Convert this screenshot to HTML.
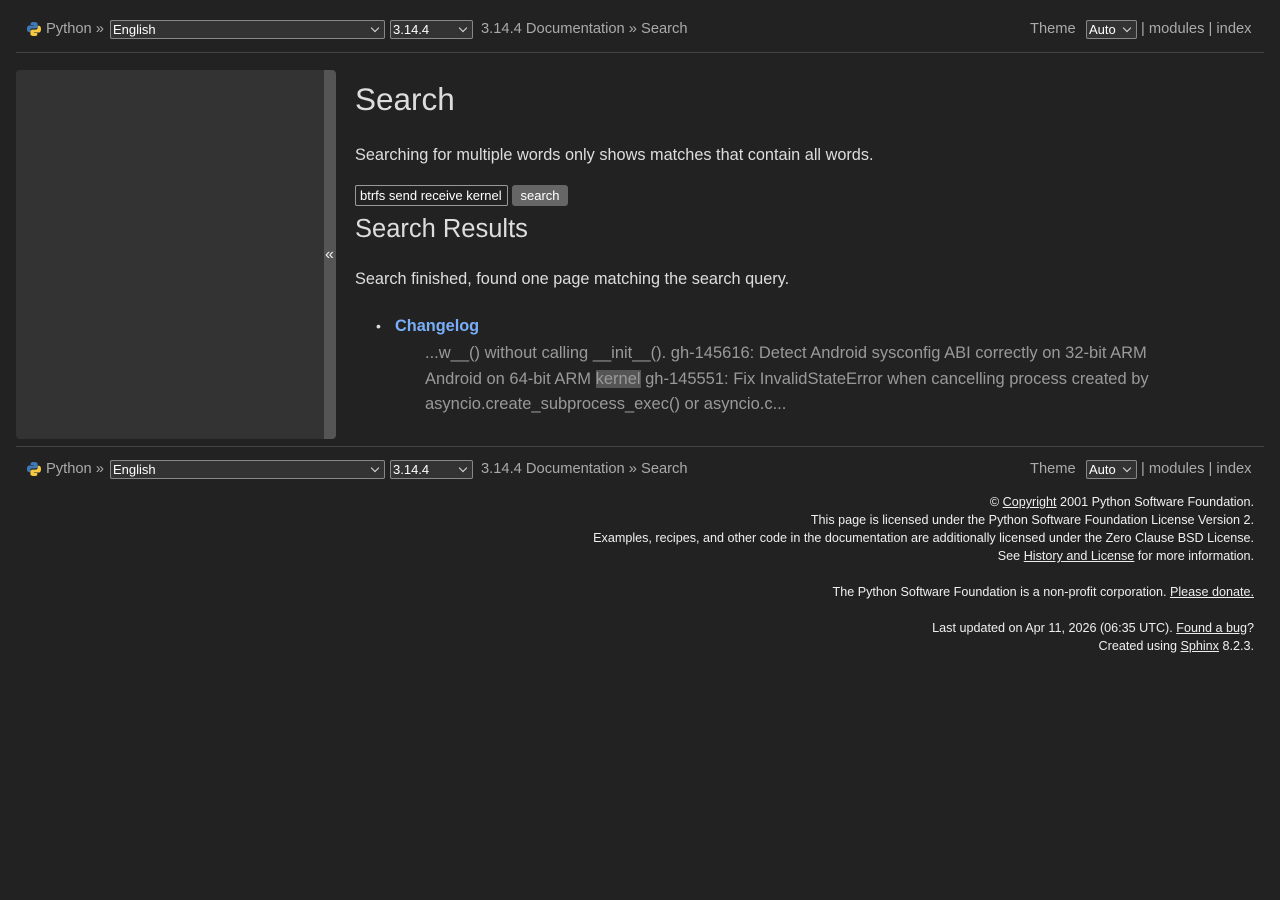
<!DOCTYPE html>
<html><head><meta charset="utf-8"><style>
body{margin:0;background:#222;color:#ddd;font-family:"Liberation Sans",Helvetica,Arial,sans-serif;width:1280px;height:900px;position:relative;overflow:hidden}
.a{position:absolute;white-space:nowrap}
.nav{font-size:14.7px;color:#aaa}
.sel{position:absolute;background:#333;border:1px solid #888;border-radius:2px;color:#fff;font-size:13px;height:19px;box-sizing:border-box;line-height:17px;padding-left:2px}
.sel:after{content:"";position:absolute;right:6px;top:4px;width:5px;height:5px;border-right:1.5px solid #ddd;border-bottom:1.5px solid #ddd;transform:rotate(45deg)}
.hr{position:absolute;left:16px;width:1248px;height:1px;background:#444}
.foot{position:absolute;right:26px;font-size:12.6px;color:#eee;text-align:right;line-height:18px}
.foot u{color:#eee}
</style></head><body>
<svg class="a" style="left:26px;top:21px" width="16" height="16" viewBox="0 0 16 16"><path d="M7.8 1C4.5 1 4.7 2.4 4.7 2.4V4h3.2v.5H3.4S1 4.2 1 7.8s2.1 3.4 2.1 3.4h1.2V9.5S4.2 7.4 6.4 7.4h3.2s2 0 2-2V2.9S11.9 1 7.8 1z" fill="#3e79b5"/><path d="M8.2 15c3.3 0 3.1-1.4 3.1-1.4V12H8.1v-.5h4.5s2.4.3 2.4-3.3-2.1-3.4-2.1-3.4h-1.2v1.7s.1 2.1-2.1 2.1H6.4s-2 0-2 2v2.5S4.1 15 8.2 15z" fill="#f5c842"/></svg>
<div class="a nav" style="left:46px;top:21px">Python »</div>
<div class="sel" style="left:110px;top:20px;width:275px">English</div>
<div class="sel" style="left:390px;top:20px;width:83px">3.14.4</div>
<div class="a nav" style="left:481px;top:21px">3.14.4 Documentation » Search</div>
<div class="a nav" style="left:1030px;top:21px">Theme</div>
<div class="sel" style="left:1086px;top:20px;width:51px">Auto</div>
<div class="a nav" style="left:1141px;top:21px">| modules | index</div>
<div class="hr" style="top:52px"></div>

<div class="a" style="left:16px;top:70px;width:320px;height:369px;background:#333;border-radius:4px"></div>
<div class="a" style="left:324px;top:70px;width:12px;height:369px;background:#555;border-radius:0 4px 4px 0"></div>
<div class="a" style="left:325px;top:246px;font-size:16px;color:#eee">«</div>

<div class="a" style="left:355px;top:81px;font-size:31.5px;color:#ddd">Search</div>
<div class="a" style="left:355px;top:146px;font-size:16.3px">Searching for multiple words only shows matches that contain all words.</div>
<div class="a" style="left:355px;top:185px;width:153px;height:21px;box-sizing:border-box;border:1px solid #999;border-radius:2px;background:#222;color:#fff;font-size:13px;line-height:19px;padding-left:4px;overflow:hidden">btrfs send receive kernel</div>
<div class="a" style="left:512px;top:185px;width:56px;height:21px;background:#666;border-radius:3px;color:#fff;font-size:13px;line-height:21px;text-align:center">search</div>
<div class="a" style="left:355px;top:215px;font-size:25.5px;color:#ddd">Search Results</div>
<div class="a" style="left:355px;top:270px;font-size:16.3px">Search finished, found one page matching the search query.</div>
<div class="a" style="left:376px;top:318px;font-size:14px">•</div>
<div class="a" style="left:395px;top:317px;font-size:16.3px;font-weight:bold;color:#79aef8">Changelog</div>
<div class="a" style="left:425px;top:341px;font-size:16.5px;color:#999;line-height:25.5px">...w__() without calling __init__(). gh-145616: Detect Android sysconfig ABI correctly on 32-bit ARM<br>Android on 64-bit ARM <span style="background:#555">kernel</span> gh-145551: Fix InvalidStateError when cancelling process created by<br>asyncio.create_subprocess_exec() or asyncio.c...</div>

<div class="hr" style="top:446px"></div>
<svg class="a" style="left:26px;top:461px" width="16" height="16" viewBox="0 0 16 16"><path d="M7.8 1C4.5 1 4.7 2.4 4.7 2.4V4h3.2v.5H3.4S1 4.2 1 7.8s2.1 3.4 2.1 3.4h1.2V9.5S4.2 7.4 6.4 7.4h3.2s2 0 2-2V2.9S11.9 1 7.8 1z" fill="#3e79b5"/><path d="M8.2 15c3.3 0 3.1-1.4 3.1-1.4V12H8.1v-.5h4.5s2.4.3 2.4-3.3-2.1-3.4-2.1-3.4h-1.2v1.7s.1 2.1-2.1 2.1H6.4s-2 0-2 2v2.5S4.1 15 8.2 15z" fill="#f5c842"/></svg>
<div class="a nav" style="left:46px;top:461px">Python »</div>
<div class="sel" style="left:110px;top:460px;width:275px">English</div>
<div class="sel" style="left:390px;top:460px;width:83px">3.14.4</div>
<div class="a nav" style="left:481px;top:461px">3.14.4 Documentation » Search</div>
<div class="a nav" style="left:1030px;top:461px">Theme</div>
<div class="sel" style="left:1086px;top:460px;width:51px">Auto</div>
<div class="a nav" style="left:1141px;top:461px">| modules | index</div>

<div class="foot" style="top:493px">© <u>Copyright</u> 2001 Python Software Foundation.<br>This page is licensed under the Python Software Foundation License Version 2.<br>Examples, recipes, and other code in the documentation are additionally licensed under the Zero Clause BSD License.<br>See <u>History and License</u> for more information.<br><br>The Python Software Foundation is a non-profit corporation. <u>Please donate.</u><br><br>Last updated on Apr 11, 2026 (06:35 UTC). <u>Found a bug</u>?<br>Created using <u>Sphinx</u> 8.2.3.</div>
</body></html>
